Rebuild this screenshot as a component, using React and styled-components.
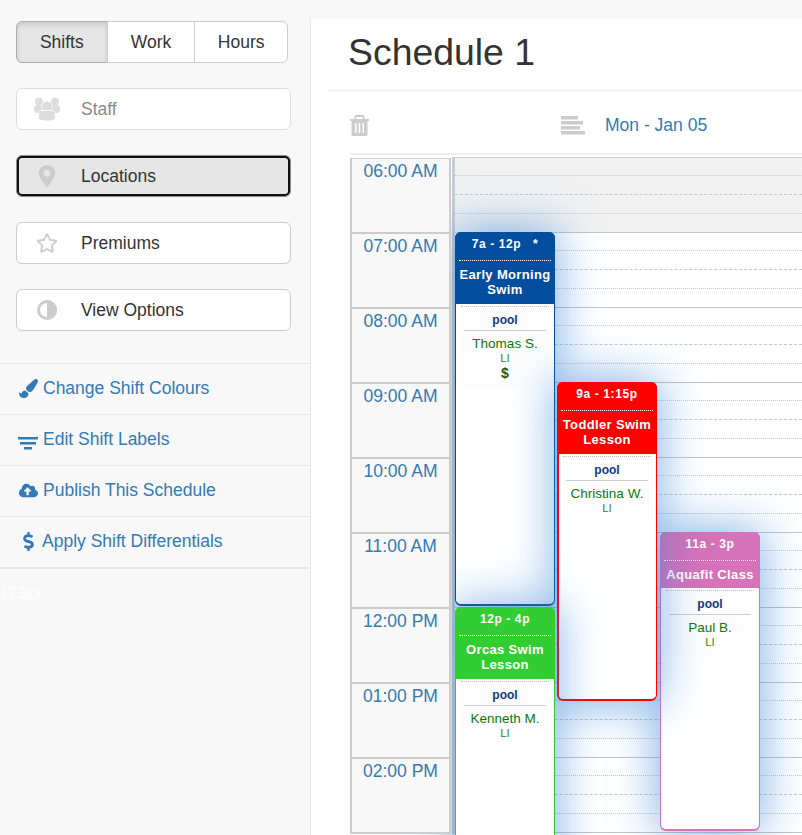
import React from 'react';
import styled, { createGlobalStyle } from 'styled-components';
import { FaMapMarkerAlt, FaRegStar, FaPaintBrush, FaCloudUploadAlt, FaDollarSign } from 'react-icons/fa';

const Global = createGlobalStyle`
  html, body { margin: 0; padding: 0; height: 835px; overflow: hidden; background: #f8f8f8; }
  body, button { font-family: "Liberation Sans", Arial, sans-serif; color: #333; }
  * { box-sizing: border-box; }
`;

const Page = styled.div`display: flex; width: 802px; height: 835px; overflow: hidden;`;
const Sidebar = styled.aside`width: 310px; flex: none; padding-top: 21px;`;
const Tabs = styled.div`display: flex; width: 272px; height: 42px; margin-left: 16px;`;
const Tab = styled.button`
  width: ${p => p.$w}px; height: 42px; padding: 0; font-size: 17.5px; color: #333;
  border: 1px solid #ccc; margin-left: -1px;
  background: ${p => p.$active ? '#e6e6e6' : '#fff'};
  box-shadow: ${p => p.$active ? 'inset 0 3px 5px rgba(0,0,0,.125)' : 'none'};
  border-color: ${p => p.$active ? '#adadad' : '#ccc'};
  &:first-child { margin-left: 0; border-radius: 6px 0 0 6px; }
  &:last-child { border-radius: 0 6px 6px 0; }
`;
const Menu = styled.div`display: flex; flex-direction: column; gap: 25px; margin: 25px 0 0 16px; width: 275px;`;
const MenuButton = styled.button`
  display: flex; align-items: center; width: 275px; height: 42px; padding: 0; text-align: left;
  font-size: 17.5px; background: ${p => p.$focus ? '#e6e6e6' : '#fff'};
  color: ${p => p.$disabled ? '#8a8a8a' : '#333'};
  border: 1px solid ${p => p.$focus ? '#8c8c8c' : p.$disabled ? '#ddd' : '#ccc'};
  border-radius: 6px;
  outline: ${p => p.$focus ? '2px solid #111' : 'none'};
  outline-offset: ${p => p.$focus ? '-3px' : '0'};
`;
const MenuIcon = styled.span`
  display: flex; justify-content: center; align-items: center; width: 30px; margin-left: 15px; margin-right: 19px;
  color: ${p => p.$disabled ? '#ddd' : '#ccc'}; font-size: 22px;
`;
const Links = styled.nav`margin-top: 32px; border-bottom: 2px solid #e7e7e7;`;
const LinkRow = styled.a`
  display: flex; align-items: center; height: 51px; padding-left: 18px;
  border-top: 1px solid #e7e7e7; color: #337ab7; font-size: 17.5px; padding-bottom: 1px;
`;
const LinkIcon = styled.span`display: flex; justify-content: center; width: 20px; margin-right: ${p => p.$gap || 5}px; font-size: 19px; margin-top: ${p => p.$top || 0}px;`;
const Ghost = styled.div`color: #fff; font-size: 16px; margin-top: 16px; margin-left: -1px;`;

const Main = styled.main`
  flex: 1; margin-top: 19px; height: 816px; background: #fff; border-left: 1px solid #e7e7e7; overflow: hidden;
`;
const TitleBar = styled.div`height: 72px; margin-left: 18px; border-bottom: 1px solid #eee; padding-left: 19px;`;
const Title = styled.h1`margin: 0; padding-top: 11px; font-size: 37.4px; font-weight: 400; line-height: 45px; color: #333;`;
const Toolbar = styled.div`
  display: flex; align-items: center; height: 64px; margin-left: 39px; border-bottom: 2px solid #eee; padding-top: 6px;
`;
const ToolIcon = styled.svg`display: block; flex: none; fill: #ccc;`;
const AlignWrap = styled.span`margin-left: 192px; display: flex;`;
const DateLink = styled.a`color: #337ab7; font-size: 17.5px; margin-left: 20px;`;
const Schedule = styled.div`display: flex; margin: 2px 0 0 39px;`;
const TimeCol = styled.div`
  position: relative; z-index: 2; width: 101px; flex: none; margin-top: 1px; border: solid #ccc; border-width: 1px 2px 0; background: #f8f8f8;
`;
const TimeCell = styled.div`
  height: 75px; border-bottom: 2px solid #ccc; color: #337ab7; font-size: 17.5px; text-align: center; padding-top: 2px; line-height: 20px;
`;
const Lane = styled.div`
  position: relative; flex: 1; margin-left: 1px; border-left: 3px solid #c8ccd0; border-top: 1px solid #ccc; width: 360px;
`;
const Hour = styled.div`
  display: flex; flex-direction: column; height: 75px; background: ${p => p.$closed ? '#f1f1f1' : 'transparent'};
`;
const Quarter = styled.div`
  height: ${p => p.$h}px; border-bottom: 1px ${p => p.$line} ${p => p.$line === 'solid' ? '#c4c4c4' : '#c8c8c8'};
`;
const Event = styled.div`
  position: absolute; left: ${p => p.$left}px; top: ${p => p.$top}px; width: 100px; height: ${p => p.$h}px;
  border: solid ${p => p.$c}; border-width: 1px 1px 2px ${p => p.$thick ? 2 : 1}px; border-radius: 6px; background: #fff;
  box-shadow: 0 0 45px 3px rgba(50,130,215,.6);
`;
const EventHead = styled.div`
  margin: -1px -1px 0 ${p => p.$thick ? -2 : -1}px; height: ${p => p.$h}px; background: ${p => p.$c}; border-radius: 6px 6px 0 0; color: #fff; text-align: center; padding: 0 4px;
`;
const EventTime = styled.div`
  font-size: 12px; font-weight: 700; letter-spacing: .6px; height: 29px; line-height: 24px; border-bottom: 1px dotted #fff; white-space: pre;
`;
const EventName = styled.div`font-size: 13px; font-weight: 700; line-height: 15px; padding-top: 6px; letter-spacing: .35px; white-space: nowrap;`;
const EventBody = styled.div`
  margin: 2px 5px 0 ${p => p.$thick ? 4 : 5}px; border-top: 1px dotted #bbb; background: #fdfdfd; text-align: center; padding: 0 3px 6px;
`;
const Loc = styled.div`
  font-size: 12px; font-weight: 700; color: #12387f; height: 24px; line-height: 27px; border-bottom: 1px solid #ccc;
`;
const Person = styled.div`font-size: 13.5px; color: #0a7a0a; line-height: 16px; margin-top: 5px; white-space: nowrap;`;
const Cert = styled.div`font-size: 11.5px; color: #3d8a1a; line-height: 13px;`;
const Dollar = styled.div`font-size: 14px; font-weight: 700; color: #1a5a1a; line-height: 17px;`;

const hours = ['06:00 AM','07:00 AM','08:00 AM','09:00 AM','10:00 AM','11:00 AM','12:00 PM','01:00 PM','02:00 PM'];

const events = [
  { left: 0, top: 74, h: 374, c: '#034e9e', hh: 72, time: '7a - 12p   *', name: ['Early Morning', 'Swim'], who: 'Thomas S.', dollar: true },
  { left: 205, top: 374, h: 299, c: '#d672b9', hh: 56, time: '11a - 3p', name: ['Aquafit Class'], who: 'Paul B.' },
  { left: 102, top: 224, h: 319, c: '#ff0000', hh: 72, time: '9a - 1:15p', name: ['Toddler Swim', 'Lesson'], who: 'Christina W.', thick: true },
  { left: 0, top: 449, h: 300, c: '#32cd32', hh: 72, time: '12p - 4p', name: ['Orcas Swim', 'Lesson'], who: 'Kenneth M.' },
];

const UsersIcon = () => (
  <svg width="26" height="24" viewBox="0 0 26 24" fill="currentColor">
    <circle cx="5" cy="4.500" r="4" />
    <circle cx="21" cy="4.500" r="4" />
    <rect x="0" y="8" width="26" height="8" rx="3.500" />
    <circle cx="13" cy="9.500" r="5.500" stroke="#fff" strokeWidth=".8" />
    <path d="M4.500 17c0-2 1.500-3.500 3.500-3.500h10c2 0 3.500 1.500 3.500 3.500v4c0 2-3.500 3-8.500 3s-8.500-1-8.500-3z" stroke="#fff" strokeWidth=".8" />
  </svg>
);

const AdjustIcon = () => (
  <svg width="20" height="20" viewBox="0 0 20 20">
    <circle cx="10" cy="10" r="8.500" fill="#fff" stroke="#ccc" strokeWidth="3" />
    <path d="M10 0a10 10 0 0 1 0 20z" fill="#ccc" />
  </svg>
);

const TrashIcon = () => (
  <ToolIcon width="19" height="21" viewBox="0 0 19 21">
    <path d="M6 0h7a1.500 1.500 0 0 1 1.500 1.500V4H19v2H17.500v13.500A1.500 1.500 0 0 1 16 21H3a1.500 1.500 0 0 1-1.500-1.500V6H0V4h4.500V1.500A1.500 1.500 0 0 1 6 0zM6.300 4h6.400V2H6.300z" fillRule="evenodd" />
    <path d="M5 8h1.500v10H5zM8.750 8h1.500v10h-1.500zM12.500 8H14v10h-1.500z" fill="#fff" />
  </ToolIcon>
);

const AlignLinesIcon = () => (
  <ToolIcon width="24" height="19" viewBox="0 0 24 19">
    <rect x="0" y="0" width="17" height="3.500" />
    <rect x="0" y="5" width="22" height="3.500" />
    <rect x="0" y="10" width="19" height="3.500" />
    <rect x="0" y="15" width="24" height="3.500" />
  </ToolIcon>
);

const CenterLinesIcon = () => (
  <svg width="20" height="14" viewBox="0 0 20 14" fill="currentColor">
    <rect x="0" y="1" width="20" height="2.500" />
    <rect x="2" y="6" width="16" height="2.500" />
    <rect x="6" y="11" width="8" height="2.500" />
  </svg>
);

export default function App() {
  return (
    <>
      <Global />
      <Page>
        <Sidebar>
          <Tabs>
            <Tab $w={92} $active>Shifts</Tab>
            <Tab $w={89}>Work</Tab>
            <Tab $w={94}>Hours</Tab>
          </Tabs>
          <Menu>
            <MenuButton $disabled><MenuIcon $disabled><UsersIcon /></MenuIcon>Staff</MenuButton>
            <MenuButton $focus><MenuIcon><FaMapMarkerAlt /></MenuIcon>Locations</MenuButton>
            <MenuButton><MenuIcon><FaRegStar /></MenuIcon>Premiums</MenuButton>
            <MenuButton><MenuIcon><AdjustIcon /></MenuIcon>View Options</MenuButton>
          </Menu>
          <Links>
            <LinkRow><LinkIcon><FaPaintBrush /></LinkIcon>Change Shift Colours</LinkRow>
            <LinkRow><LinkIcon $top={6}><CenterLinesIcon /></LinkIcon>Edit Shift Labels</LinkRow>
            <LinkRow><LinkIcon><FaCloudUploadAlt /></LinkIcon>Publish This Schedule</LinkRow>
            <LinkRow><LinkIcon $gap={4}><FaDollarSign /></LinkIcon>Apply Shift Differentials</LinkRow>
          </Links>
          <Ghost>123xx</Ghost>
        </Sidebar>
        <Main>
          <TitleBar><Title>Schedule 1</Title></TitleBar>
          <Toolbar>
            <TrashIcon />
            <AlignWrap><AlignLinesIcon /></AlignWrap>
            <DateLink>Mon - Jan 05</DateLink>
          </Toolbar>
          <Schedule>
            <TimeCol>
              {hours.map(h => <TimeCell key={h}>{h}</TimeCell>)}
            </TimeCol>
            <Lane>
              {hours.map((h, i) => (
                <Hour key={h} $closed={i === 0}>
                  <Quarter $h={18} $line="dotted" />
                  <Quarter $h={19} $line="dashed" />
                  <Quarter $h={19} $line="dotted" />
                  <Quarter $h={19} $line="solid" />
                </Hour>
              ))}
              {events.map(e => (
                <Event key={e.who} $left={e.left} $top={e.top} $h={e.h} $c={e.c} $thick={e.thick}>
                  <EventHead $c={e.c} $h={e.hh} $thick={e.thick}>
                    <EventTime>{e.time}</EventTime>
                    <EventName>{e.name.map(n => <div key={n}>{n}</div>)}</EventName>
                  </EventHead>
                  <EventBody $thick={e.thick}>
                    <Loc>pool</Loc>
                    <Person>{e.who}</Person>
                    <Cert>LI</Cert>
                    {e.dollar && <Dollar>$</Dollar>}
                  </EventBody>
                </Event>
              ))}
            </Lane>
          </Schedule>
        </Main>
      </Page>
    </>
  );
}
